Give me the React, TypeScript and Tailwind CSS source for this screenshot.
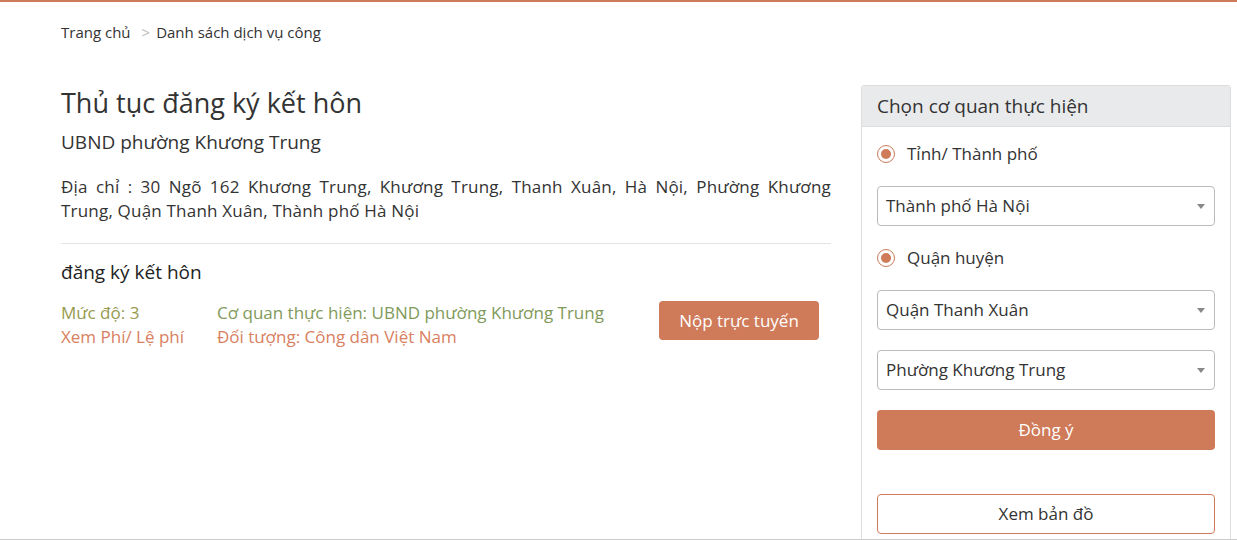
import { useState } from "react";

function Radio({ label }: { label: string }) {
    return (
        <label className="flex items-center gap-3 h-[24px]">
            <span className="w-[18px] h-[18px] rounded-full border border-[#cf7a58] flex items-center justify-center">
                <span className="w-[10px] h-[10px] rounded-full bg-[#cf7a58]" />
            </span>
            <span className="text-[17px] text-[#333]">{label}</span>
        </label>
    );
}

function Select({ value }: { value: string }) {
    return (
        <div className="h-[40px] border border-[#bbb] rounded-[4px] flex items-center justify-between pl-[8px] pr-[9px] bg-white">
            <span className="text-[17px] text-[#333]">{value}</span>
            <span className="w-0 h-0 border-l-[4px] border-r-[4px] border-t-[5px] border-l-transparent border-r-transparent border-t-[#888]" />
        </div>
    );
}

export default function App() {
    const [agency] = useState("UBND phường Khương Trung");

    return (
        <div className="w-[1237px] h-[540px] bg-white border-t-2 border-[#cf7a58] border-b border-b-[#ccc] overflow-hidden font-['Open_Sans',sans-serif] text-[#333]">
            <div className="pl-[61px] pt-[19px] text-[15px] text-[#333] flex items-center h-[22px] box-content">
                <span>Trang chủ</span>
                <span className="text-[#bbb] ml-[11px] mr-[6px]">&gt;</span>
                <span>Danh sách dịch vụ công</span>
            </div>

            <div className="flex pl-[61px] pt-[41px]">
                <div className="w-[770px]">
                    <h1 className="text-[27px] leading-[36px] pt-[1px] text-[#333]">Thủ tục đăng ký kết hôn</h1>
                    <div className="text-[19px] leading-[26px] mt-[8px]">{agency}</div>
                    <p className="text-[17px] leading-[24px] tracking-[0.2px] text-justify mt-[20px]">
                        Địa chỉ : 30 Ngõ 162 Khương Trung, Khương Trung, Thanh Xuân, Hà Nội, Phường Khương Trung, Quận Thanh Xuân, Thành phố Hà Nội
                    </p>
                    <hr className="border-t border-[#e3e3e3] mt-[20px]" />
                    <div className="text-[19px] leading-[26px] mt-[15px] font-medium text-[#222]">đăng ký kết hôn</div>
                    <div className="flex items-start mt-[16px]">
                        <div className="w-[156px] text-[17px] leading-[24px]">
                            <div className="text-[#969a4e]">Mức độ: 3</div>
                            <div className="text-[#d9805f]">Xem Phí/ Lệ phí</div>
                        </div>
                        <div className="w-[442px] text-[17px] leading-[24px]">
                            <div className="text-[#7f9a5a]">Cơ quan thực hiện: {agency}</div>
                            <div className="text-[#d9805f]">Đối tượng: Công dân Việt Nam</div>
                        </div>
                        <button className="w-[160px] h-[39px] rounded-[4px] bg-[#cf7a58] text-white text-[17px]">
                            Nộp trực tuyến
                        </button>
                    </div>
                </div>

                <div className="ml-[30px] w-[370px] border border-[#ddd] rounded-t-[3px] h-[460px] mt-[1px]">
                    <div className="h-[41px] bg-[#e9eaec] flex items-center px-[15px] text-[19px] text-[#333] border-b border-[#ddd]">
                        Chọn cơ quan thực hiện
                    </div>
                    <div className="px-[15px] pt-[15px] flex flex-col">
                        <Radio label="Tỉnh/ Thành phố" />
                        <div className="mt-[20px]"><Select value="Thành phố Hà Nội" /></div>
                        <div className="mt-[20px]"><Radio label="Quận huyện" /></div>
                        <div className="mt-[20px]"><Select value="Quận Thanh Xuân" /></div>
                        <div className="mt-[20px]"><Select value="Phường Khương Trung" /></div>
                        <button className="mt-[20px] h-[40px] rounded-[4px] bg-[#cf7a58] text-white text-[17px]">Đồng ý</button>
                        <button className="mt-[44px] h-[40px] rounded-[4px] border border-[#cf7a58] bg-white text-[#333] text-[17px]">Xem bản đồ</button>
                    </div>
                </div>
            </div>
        </div>
    );
}
